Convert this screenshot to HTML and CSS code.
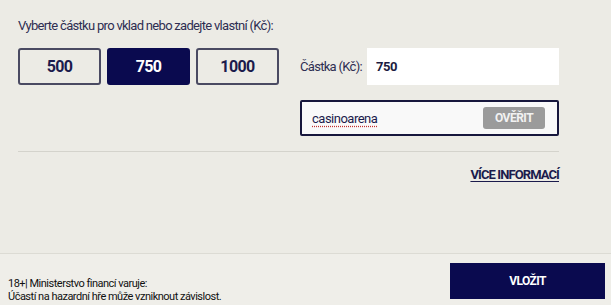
FILE: index.html
```html
<!DOCTYPE html>
<html lang="cs">
<head>
<meta charset="utf-8">
<link rel="stylesheet" href="styles.css">
</head>
<body>
<div class="page">
  <div class="main">
    <div class="title">Vyberte částku pro vklad nebo zadejte vlastní (Kč):</div>
    <div class="row">
      <div class="amounts">
        <button class="amt">500</button>
        <button class="amt active">750</button>
        <button class="amt">1000</button>
      </div>
      <div class="fields">
        <div class="field-row">
          <label class="lbl">Částka (Kč):</label>
          <div class="input">750</div>
        </div>
        <div class="code">
          <span class="code-text">casinoarena</span>
          <span class="verify">OVĚŘIT</span>
        </div>
      </div>
    </div>
    <div class="divider"></div>
    <div class="more"><a class="more-link">VÍCE INFORMACÍ</a></div>
  </div>
  <div class="footer">
    <div class="warn">18+| Ministerstvo financí varuje:<br>Účastí na hazardní hře může vzniknout závislost.</div>
    <button class="submit">VLOŽIT</button>
  </div>
</div>
</body>
</html>
```
FILE: styles.css
```css
html, body {
  margin: 0;
  padding: 0;
  background: #ecebe5;
}
.page {
  width: 611px;
  height: 305px;
  display: flex;
  flex-direction: column;
  font-family: "Roboto", sans-serif;
  color: #26264d;
}
.main {
  padding: 18px 52px 0 18px;
  flex: 1;
}
.title {
  font-size: 13px;
  letter-spacing: -0.7px;
  line-height: 16px;
  color: #2e2e52;
  margin-bottom: 14px;
}
.row {
  display: flex;
  gap: 21px;
}
.amounts {
  display: flex;
  gap: 6px;
  height: 37px;
}
.amt {
  width: 83px;
  height: 37px;
  box-sizing: border-box;
  border: 2px solid #4a4a62;
  border-radius: 3px;
  background: #ecebe5;
  color: #1b1b4c;
  font-family: inherit;
  font-weight: bold;
  font-size: 16px;
  letter-spacing: -0.6px;
  padding: 0;
}
.amt.active {
  background: #0a0a4f;
  border-color: #0a0a4f;
  color: #ffffff;
}
.fields {
  flex: 1;
  display: flex;
  flex-direction: column;
  gap: 15px;
}
.field-row {
  display: flex;
  align-items: center;
  height: 37px;
}
.lbl {
  width: 67px;
  white-space: nowrap;
  font-size: 13px;
  letter-spacing: -0.7px;
  color: #2e2e52;
}
.input {
  flex: 1;
  height: 37px;
  background: #ffffff;
  display: flex;
  align-items: center;
  padding-left: 9px;
  font-weight: bold;
  font-size: 13px;
  letter-spacing: -0.5px;
  color: #1b1b40;
}
.code {
  height: 36px;
  box-sizing: border-box;
  border: 2px solid #17173d;
  border-radius: 2px;
  background: #f9f9f9;
  display: flex;
  align-items: center;
  justify-content: space-between;
  padding: 0 12px 0 10px;
}
.code-text {
  font-size: 13px;
  letter-spacing: -0.5px;
  color: #1b1b4c;
  text-decoration: underline dotted #c03030;
  text-underline-offset: 3px;
}
.verify {
  width: 62px;
  height: 22px;
  background: #9b9b9b;
  border-radius: 3px;
  color: #f2f2f2;
  font-weight: bold;
  font-size: 12px;
  letter-spacing: -0.5px;
  display: flex;
  align-items: center;
  justify-content: center;
}
.divider {
  margin-top: 15px;
  height: 1px;
  background: #d4d3cc;
}
.more {
  display: flex;
  justify-content: flex-end;
  margin-top: 15px;
}
.more-link {
  font-size: 13px;
  letter-spacing: -0.9px;
  font-weight: bold;
  color: #1b1b4c;
  text-decoration: underline;
  text-underline-offset: 2px;
}
.footer {
  height: 52px;
  box-sizing: border-box;
  border-top: 1px solid #dcdbd4;
  background: #efeee9;
  display: flex;
  align-items: flex-start;
  justify-content: space-between;
  padding: 9px 6px 0 8px;
}
.warn {
  font-size: 11px;
  letter-spacing: -0.5px;
  line-height: 13px;
  color: #111111;
  margin-top: 14px;
}
.submit {
  width: 155px;
  height: 36px;
  border: none;
  background: #0a0a4f;
  color: #ffffff;
  font-family: inherit;
  font-weight: bold;
  font-size: 12px;
  letter-spacing: -0.6px;
  padding: 0;
}
```
